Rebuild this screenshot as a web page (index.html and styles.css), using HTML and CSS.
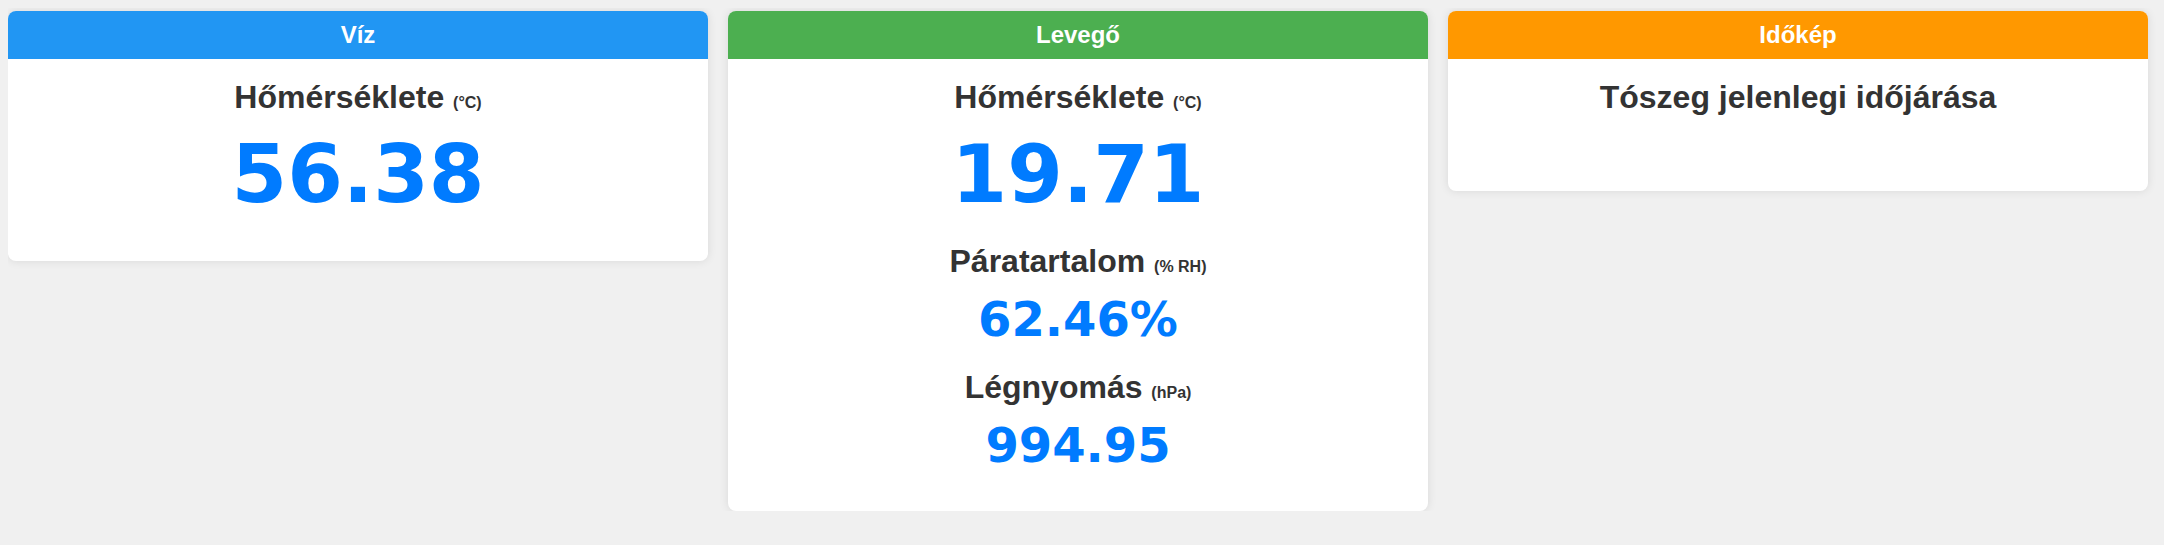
FILE: index.html
```html
<!DOCTYPE html>
<html lang="hu">
<head>
<meta charset="utf-8">
<title>Időjárás</title>
<link rel="stylesheet" href="styles.css">
</head>
<body>
<div class="cards">
  <section class="card">
    <div class="card-header header-water">Víz</div>
    <div class="card-body">
      <div class="metric">
        <h2 class="label">Hőmérséklete <span class="unit">(°C)</span></h2>
        <div class="value value-lg">56.38</div>
      </div>
    </div>
  </section>
  <section class="card">
    <div class="card-header header-air">Levegő</div>
    <div class="card-body">
      <div class="metric">
        <h2 class="label">Hőmérséklete <span class="unit">(°C)</span></h2>
        <div class="value value-lg">19.71</div>
      </div>
      <div class="metric">
        <h2 class="label">Páratartalom <span class="unit">(% RH)</span></h2>
        <div class="value value-md">62.46%</div>
      </div>
      <div class="metric">
        <h2 class="label">Légnyomás <span class="unit">(hPa)</span></h2>
        <div class="value value-md">994.95</div>
      </div>
    </div>
  </section>
  <section class="card">
    <div class="card-header header-weather">Időkép</div>
    <div class="card-body">
      <h2 class="label">Tószeg jelenlegi időjárása</h2>
      <div class="widget"></div>
    </div>
  </section>
</div>
</body>
</html>
```
FILE: styles.css
```css
body {
  margin: 8px;
  background: #f0f0f0;
  font-family: "Liberation Sans", Arial, sans-serif;
  color: #333;
}

.cards {
  display: flex;
  align-items: flex-start;
  gap: 20px;
  padding-top: 3px;
}

.card {
  width: 700px;
  flex: 0 0 700px;
  background: #fff;
  border-radius: 8px;
  overflow: hidden;
  box-shadow: 0 0 10px rgba(0, 0, 0, 0.1);
}

.card-header {
  padding: 10px;
  font-size: 24px;
  line-height: 28px;
  font-weight: bold;
  color: #fff;
  text-align: center;
}

.header-water { background: #2196f3; }
.header-air { background: #4caf50; }
.header-weather { background: #ff9800; }

.card-body {
  padding: 20px 20px 38px;
  text-align: center;
}

.label {
  margin: 0;
  font-size: 32px;
  font-weight: bold;
  color: #333;
}

.unit {
  font-size: 16px;
}

.value {
  font-family: "DejaVu Sans", Verdana, sans-serif;
  font-weight: bold;
  color: #007bff;
}

.value-lg {
  font-size: 80px;
  margin-top: 12px;
  margin-bottom: 2px;
}

.value-md {
  font-size: 48px;
  margin-top: 11px;
}

.metric + .metric {
  margin-top: 22px;
}

.widget {
  height: 37px;
}
```
